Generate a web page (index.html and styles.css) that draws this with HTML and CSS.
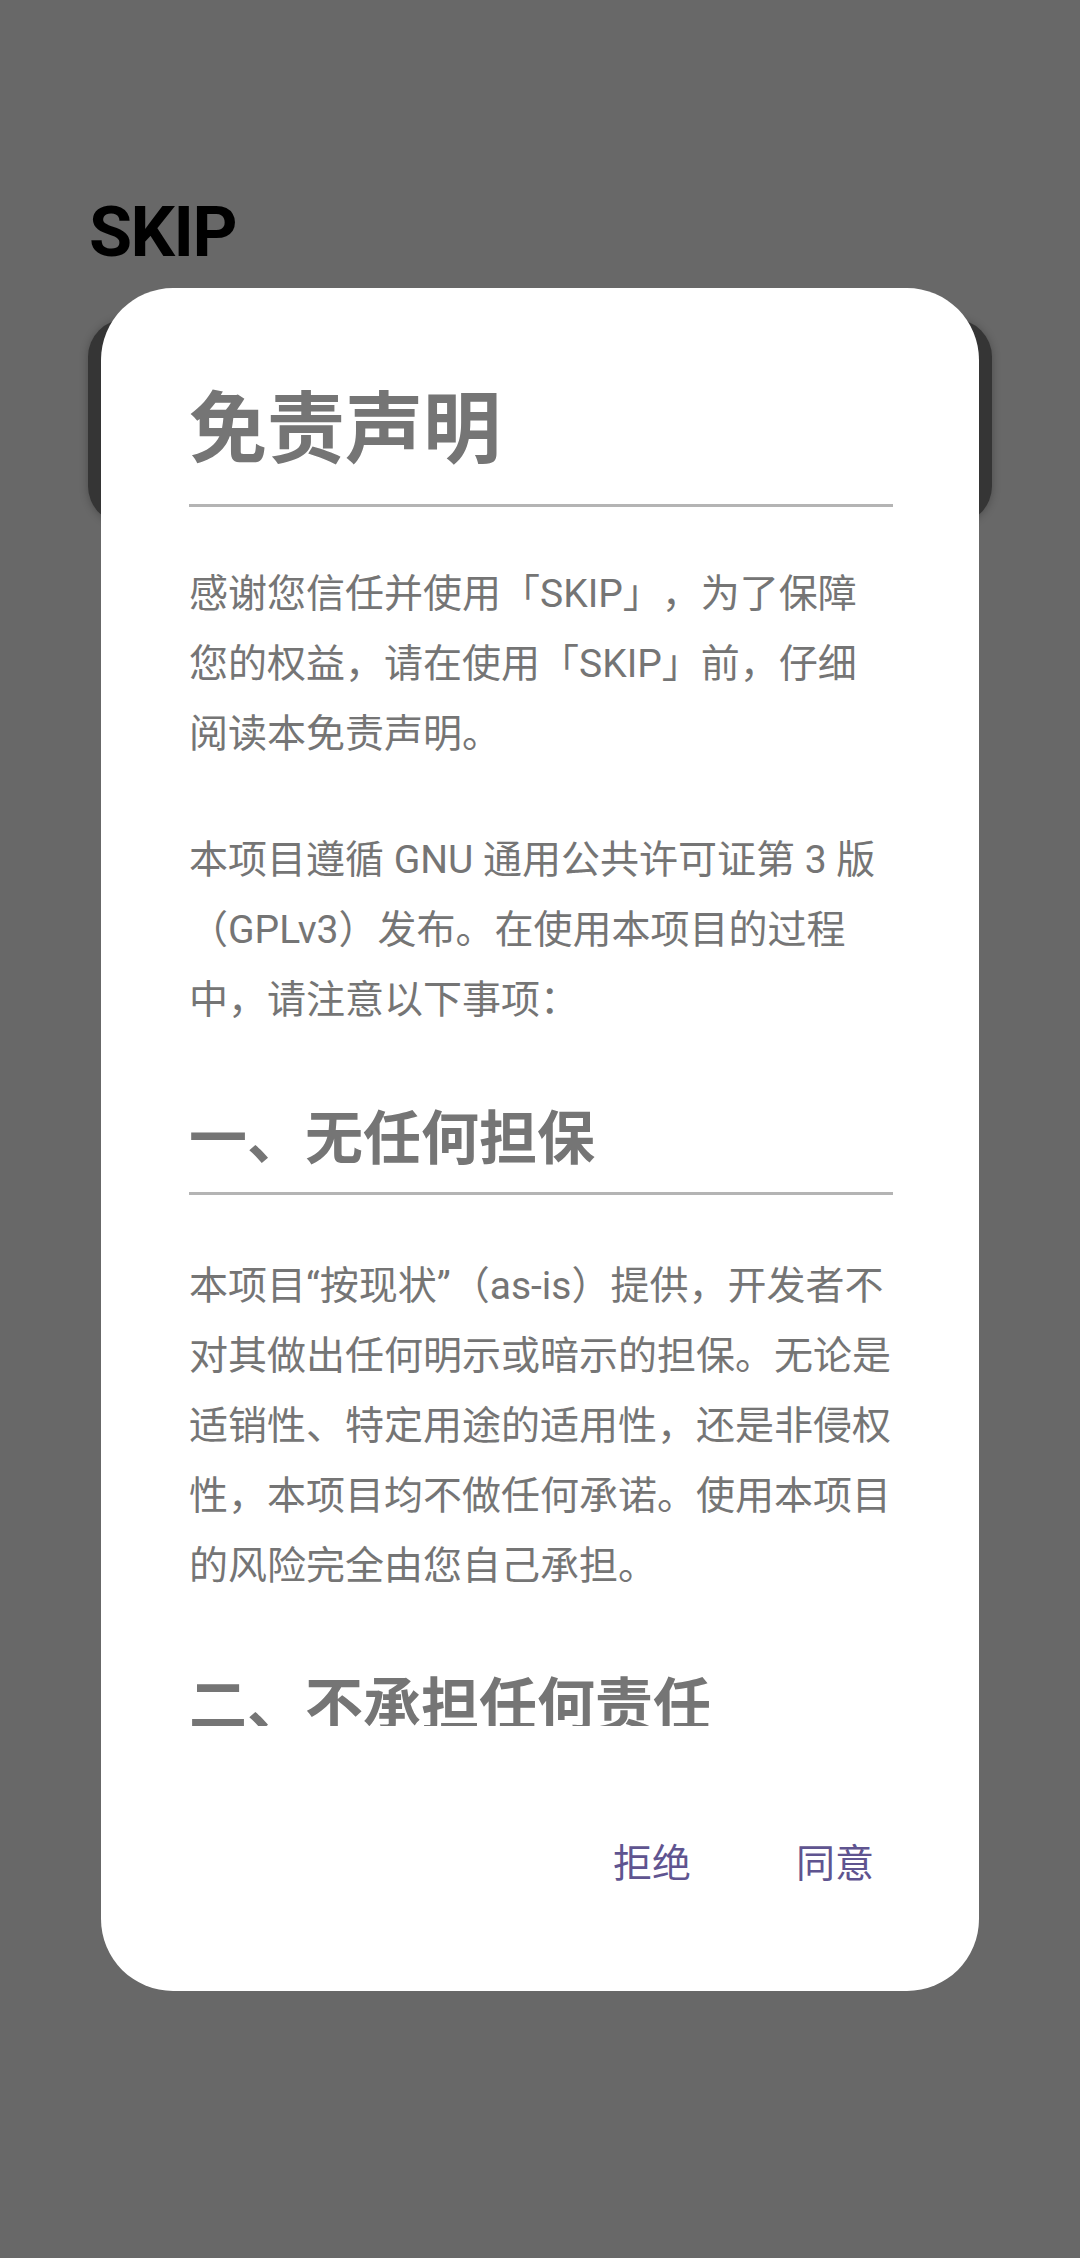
FILE: index.html
```html
<!DOCTYPE html>
<html lang="zh-CN">
<head>
<meta charset="utf-8">
<title>SKIP</title>
<link rel="stylesheet" href="styles.css">
</head>
<body>
<div class="app">
  <header class="app-bar">
    <h1 class="app-title">SKIP</h1>
  </header>
  <div class="card"></div>
</div>

<div class="scrim">
  <div class="dialog" role="dialog">
    <div class="dialog-body">
      <h2 class="doc-title">免责声明</h2>
      <p class="doc-p">感谢您信任并使用「SKIP」，为了保障<br>您的权益，请在使用「SKIP」前，仔细<br>阅读本免责声明。</p>
      <p class="doc-p">本项目遵循 GNU 通用公共许可证第 3 版<br>（GPLv3）发布。在使用本项目的过程<br>中，请注意以下事项：</p>
      <h3 class="doc-h">一、无任何担保</h3>
      <p class="doc-p">本项目“按现状”（as-is）提供，开发者不<br>对其做出任何明示或暗示的担保。无论是<br>适销性、特定用途的适用性，还是非侵权<br>性，本项目均不做任何承诺。使用本项目<br>的风险完全由您自己承担。</p>
      <h3 class="doc-h doc-h-last">二、不承担任何责任</h3>
    </div>
    <div class="dialog-actions">
      <button class="text-btn" type="button">拒绝</button>
      <button class="text-btn" type="button">同意</button>
    </div>
  </div>
</div>
</body>
</html>
```

FILE: styles.css
```css
html, body {
  margin: 0;
  padding: 0;
}

body {
  width: 1080px;
  height: 2258px;
  background: #686868;
  font-family: Roboto, "Noto Sans CJK SC", sans-serif;
  overflow: hidden;
  position: relative;
}

.app {
  display: flex;
  flex-direction: column;
}

.app-bar {
  padding: 197px 0 0 89px;
}

.app-title {
  margin: 0;
  font-family: Roboto, "Noto Sans CJK SC", sans-serif;
  font-weight: 700;
  font-size: 70px;
  line-height: 70px;
  color: #000;
  letter-spacing: -1.5px;
}

.card {
  margin: 52px 88px 0 88px;
  height: 205px;
  border-radius: 38px;
  background: #353535;
  box-shadow: 0 1px 8px rgba(0, 0, 0, 0.28);
}

.scrim {
  position: absolute;
  inset: 0;
  display: flex;
  justify-content: center;
  align-items: flex-start;
  padding-top: 288px;
}

.dialog {
  width: 878px;
  height: 1703px;
  background: #fff;
  border-radius: 72px;
  display: flex;
  flex-direction: column;
  overflow: hidden;
}

.dialog-body {
  height: 1438px;
  flex: none;
  overflow: hidden;
  padding: 96px 86px 0 88px;
  box-sizing: border-box;
  color: #757575;
  text-spacing-trim: space-all;
}

.doc-title {
  margin: 0;
  font-size: 78px;
  line-height: 94px;
  font-weight: 700;
  padding-bottom: 26px;
  border-bottom: 3px solid #b4b4b4;
}

.doc-h {
  margin: 69px 0 0 0;
  font-size: 58px;
  line-height: 70px;
  font-weight: 700;
  padding-bottom: 18px;
  border-bottom: 3px solid #b4b4b4;
}

.doc-h-last {
  margin-top: 70px;
}

.doc-p {
  margin: 56px 0 0 0;
  font-size: 39px;
  line-height: 70px;
  font-weight: 400;
}

.doc-title + .doc-p {
  margin-top: 52px;
}

.dialog-actions {
  flex: 1;
  display: flex;
  justify-content: flex-end;
  align-items: flex-start;
  gap: 53px;
  padding: 103px 79px 0 0;
}

.text-btn {
  border: 0;
  background: transparent;
  padding: 0 26px;
  margin: 0;
  font-family: Roboto, "Noto Sans CJK SC", sans-serif;
  font-size: 39px;
  line-height: 70px;
  color: #5f5490;
  cursor: pointer;
}
```
